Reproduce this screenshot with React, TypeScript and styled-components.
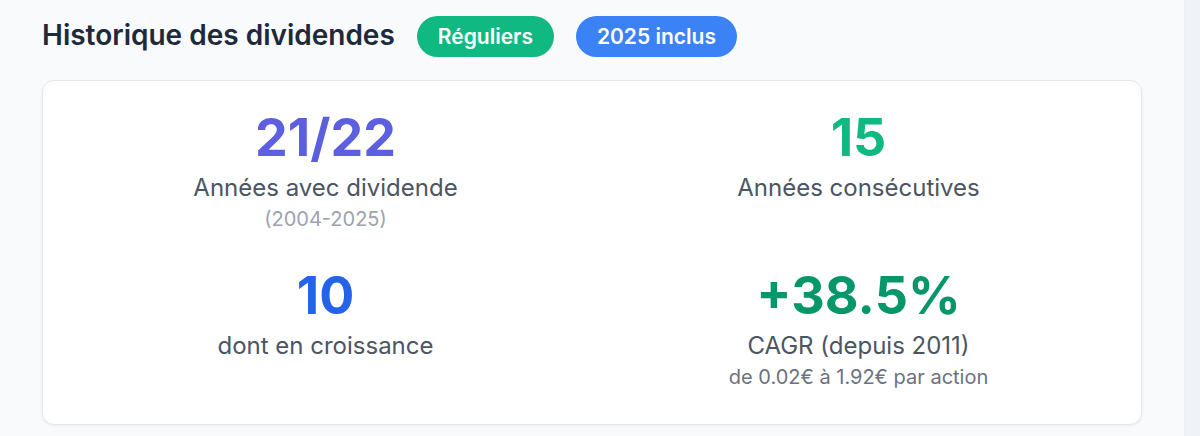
import React from "react";
import styled, { createGlobalStyle } from "styled-components";

const GlobalStyle = createGlobalStyle`
  html, body {
    margin: 0;
    padding: 0;
    background: #f8fafc;
    font-family: Inter, "Noto Sans", "Liberation Sans", sans-serif;
  }
`;

const Page = styled.div`
  display: flex;
  width: 1200px;
  height: 436px;
  overflow: hidden;
`;

const Main = styled.main`
  flex: 1;
  padding: 16px 42px 0 42px;
`;

const Gutter = styled.div`
  width: 15px;
  background: #eff3f8;
  border-left: 1px solid #edf1f5;
`;

const Header = styled.div`
  display: flex;
  align-items: center;
  gap: 22px;
  height: 41px;
  margin-bottom: 23px;
`;

const Title = styled.h2`
  margin: 0 0 3px 0;
  font-size: 28px;
  font-weight: 600;
  color: #1e293b;
`;

const Badge = styled.span<{ $tone: "green" | "blue" }>`
  display: inline-flex;
  align-items: center;
  height: 41px;
  padding: 0 21px;
  border-radius: 999px;
  font-size: 21px;
  font-weight: 600;
  color: #ffffff;
  background: ${(p) => (p.$tone === "green" ? "#10b981" : "#3b82f6")};
`;

const Card = styled.section`
  background: #ffffff;
  border: 1px solid #e5e7eb;
  border-radius: 12px;
  box-shadow: 0 1px 3px rgba(15, 23, 42, 0.06);
  padding: 27px 32px 32px;
  display: grid;
  grid-template-columns: 1fr 1fr;
  column-gap: 32px;
  row-gap: 32px;
`;

const Stat = styled.div`
  display: flex;
  flex-direction: column;
  align-items: center;
  text-align: center;
`;

const Value = styled.div<{ $color: string }>`
  font-size: 52px;
  font-weight: 700;
  line-height: 60px;
  color: ${(p) => p.$color};
`;

const Label = styled.div`
  font-size: 24px;
  line-height: 32px;
  color: #4b5563;
  margin-top: 4px;
`;

const Note = styled.div<{ $muted?: boolean }>`
  font-size: 20px;
  line-height: 30px;
  color: ${(p) => (p.$muted ? "#9ca3af" : "#6b7280")};
`;

type StatItem = {
  value: string;
  color: string;
  label: string;
  note?: string;
  muted?: boolean;
};

const stats: StatItem[] = [
  { value: "21/22", color: "#5b5fe0", label: "Années avec dividende", note: "(2004-2025)", muted: true },
  { value: "15", color: "#10b981", label: "Années consécutives" },
  { value: "10", color: "#2563eb", label: "dont en croissance" },
  { value: "+38.5%", color: "#059669", label: "CAGR (depuis 2011)", note: "de 0.02€ à 1.92€ par action" },
];

export default function App() {
  return (
    <>
      <GlobalStyle />
      <Page>
        <Main>
          <Header>
            <Title>Historique des dividendes</Title>
            <Badge $tone="green">Réguliers</Badge>
            <Badge $tone="blue">2025 inclus</Badge>
          </Header>
          <Card>
            {stats.map((s) => (
              <Stat key={s.value}>
                <Value $color={s.color}>{s.value}</Value>
                <Label>{s.label}</Label>
                {s.note && <Note $muted={s.muted}>{s.note}</Note>}
              </Stat>
            ))}
          </Card>
        </Main>
        <Gutter />
      </Page>
    </>
  );
}
